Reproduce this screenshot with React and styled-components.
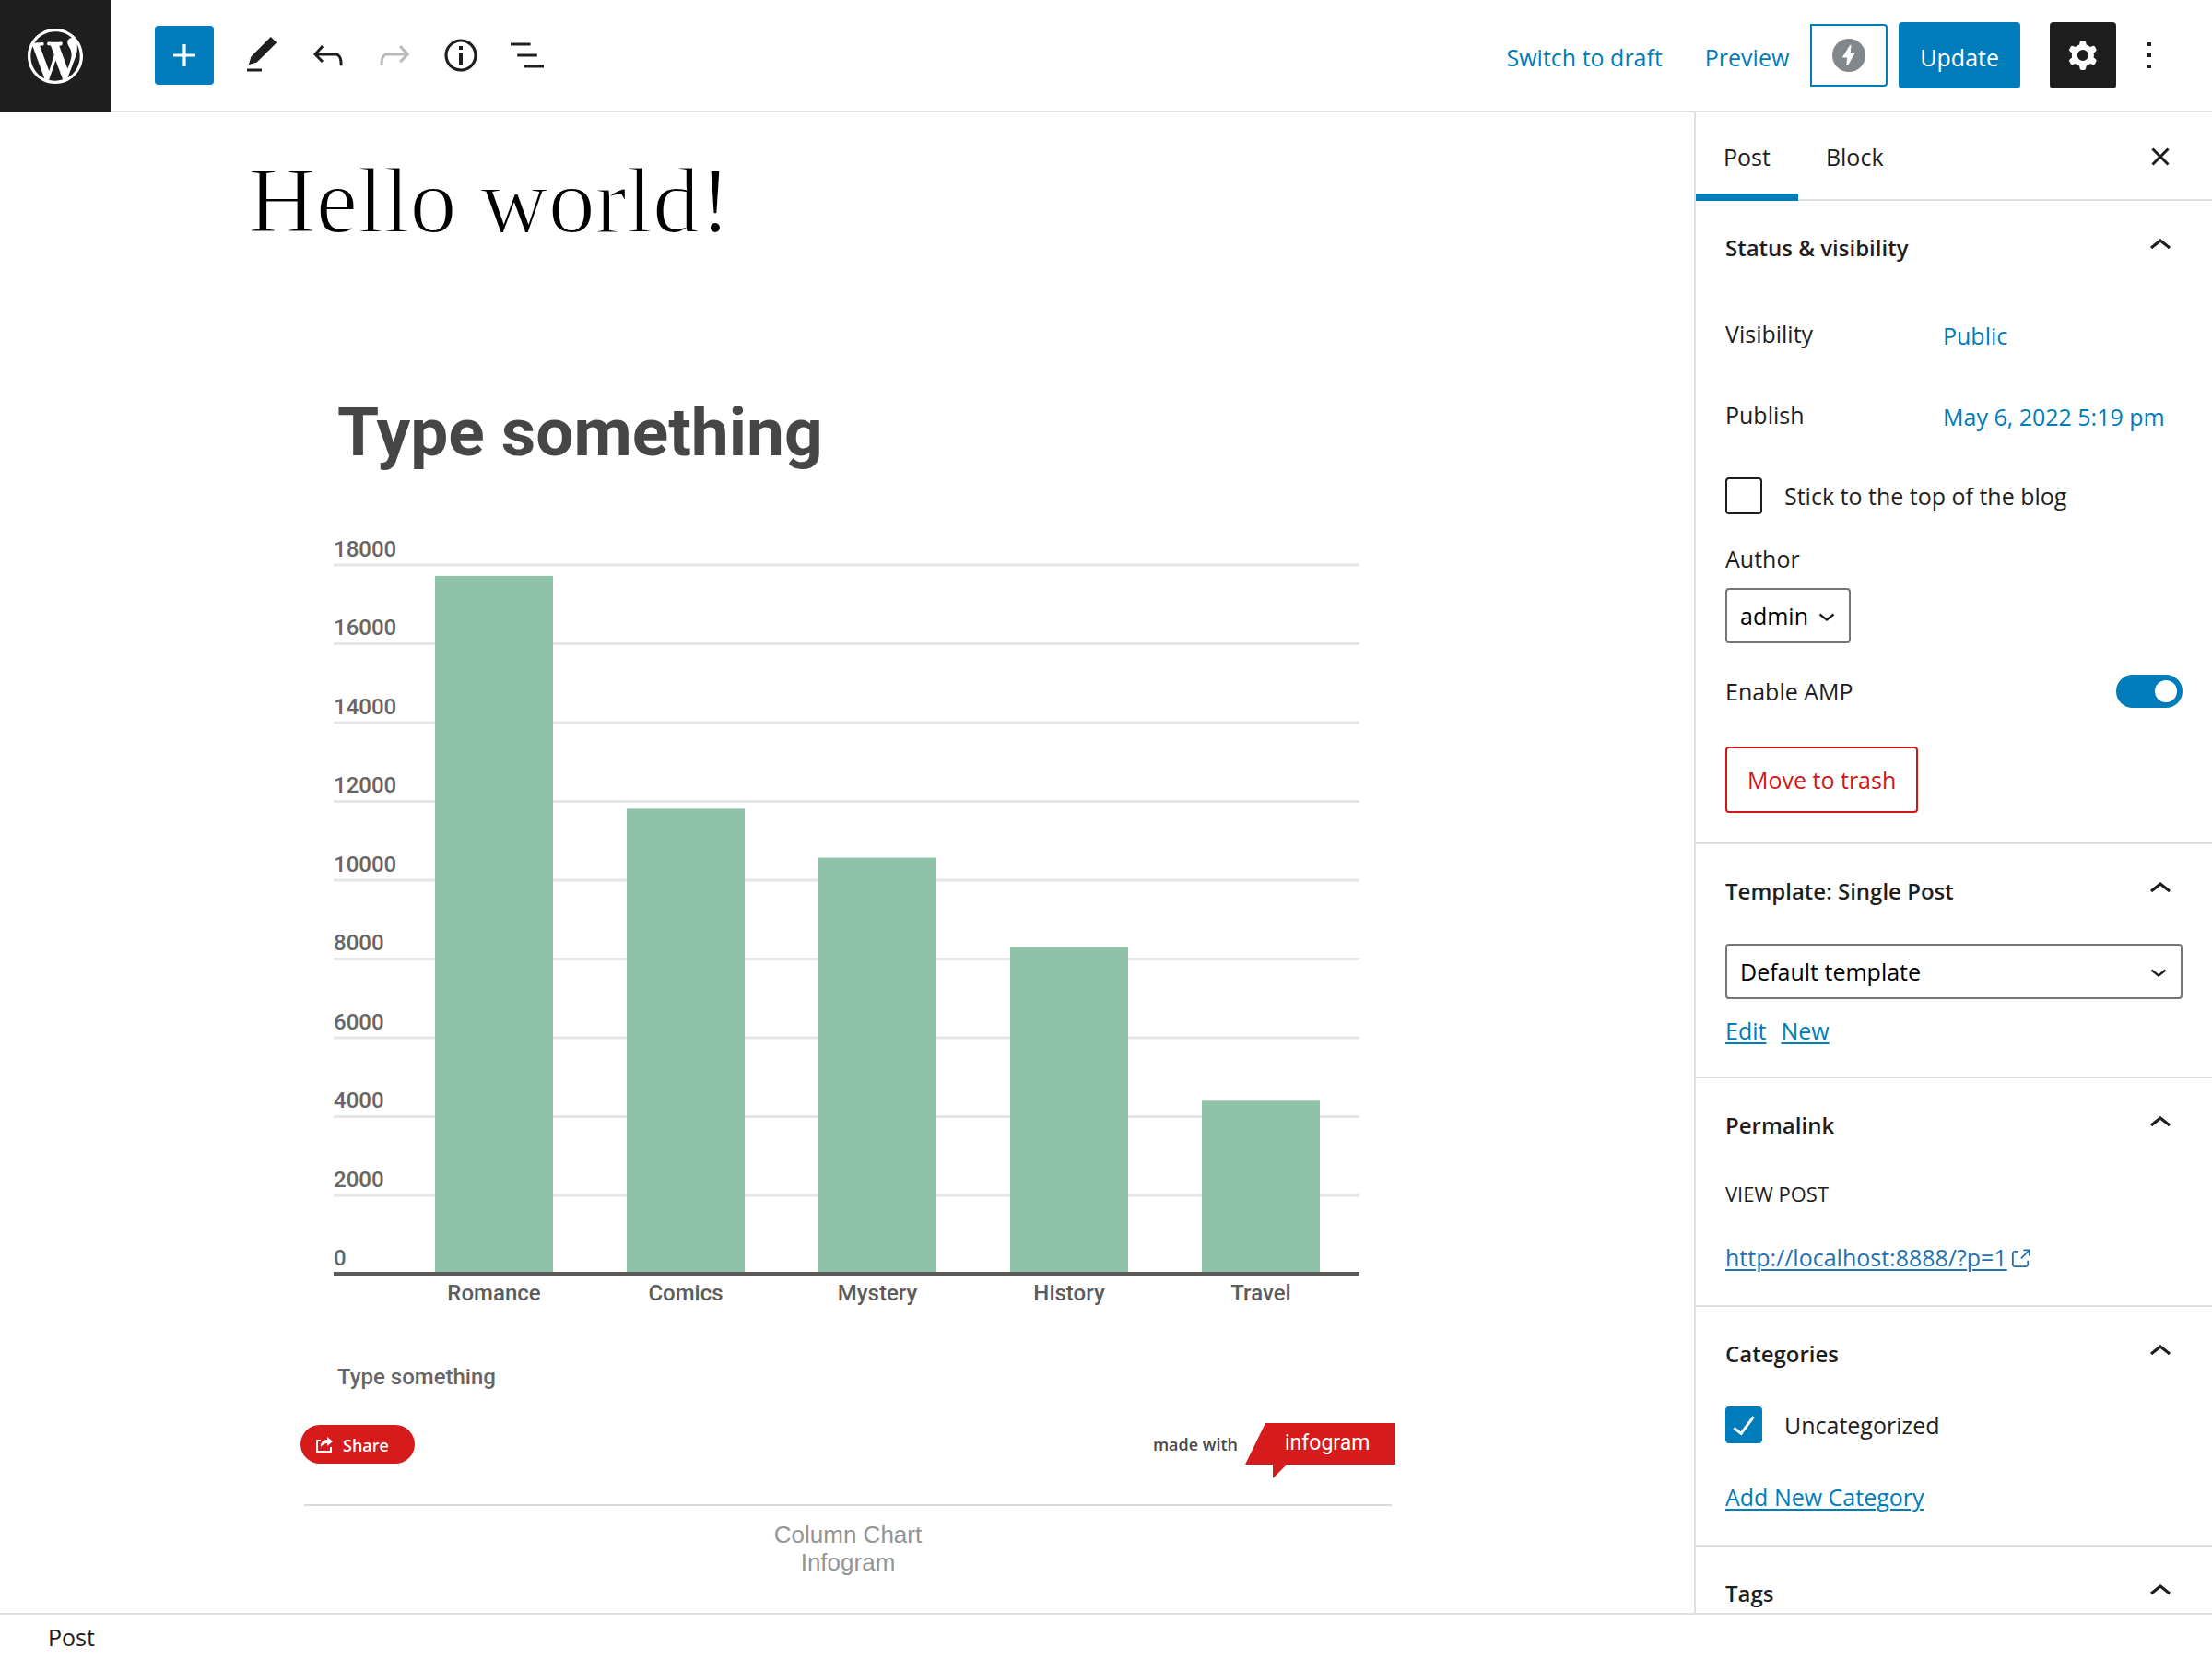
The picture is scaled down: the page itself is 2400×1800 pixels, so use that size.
import React, { useState } from "react";
import styled, { createGlobalStyle } from "styled-components";

const ui = '"Open Sans", "Noto Sans", sans-serif';
const chartFont = "Roboto, sans-serif";

const color = {
  ink: "#1e1e1e",
  line: "#e0e0e0",
  blue: "#007cba",
  link: "#2271b1",
  red: "#cc1818",
  brand: "#d51b1b",
  bar: "#8fc3a9",
};

const GlobalStyle = createGlobalStyle`
  *, *::before, *::after { box-sizing: border-box; }
  body { margin: 0; background: #fff; color: ${color.ink}; font: 25px/36px ${ui}; }
  button, input, select { font: inherit; color: inherit; margin: 0; }
  button { cursor: pointer; }
  h1, h2, h3, p, figure { margin: 0; font: inherit; }
`;

const Shell = styled.div`
  display: grid;
  grid-template-rows: auto minmax(0, 1fr) auto;
  height: 100vh;
`;

const Header = styled.header`
  display: flex;
  justify-content: space-between;
  height: 122px;
  border-bottom: 2px solid ${color.line};
`;

const Tools = styled.div`
  display: flex;
  align-items: center;
`;

const HomeLink = styled.a`
  display: grid;
  place-items: center;
  align-self: flex-start;
  width: 120px;
  height: 122px;
  margin-right: 48px;
  background: ${color.ink};
  color: #fff;
`;

const AddButton = styled.button`
  display: grid;
  place-items: center;
  width: 64px;
  height: 64px;
  margin-right: 16px;
  padding: 0;
  border: 0;
  border-radius: 4px;
  background: ${color.blue};
  color: #fff;
`;

const IconButton = styled.button`
  display: grid;
  place-items: center;
  width: 72px;
  height: 72px;
  padding: 0;
  border: 0;
  border-radius: 4px;
  background: ${(p) => (p.$pressed ? color.ink : "transparent")};
  color: ${(p) => (p.$pressed ? "#fff" : color.ink)};
  &:disabled { color: #bbb; cursor: default; }
`;

const Actions = styled(Tools)`
  padding-right: 32px;
`;

const TextButton = styled.button`
  height: 72px;
  padding: 4px 23px 0;
  border: 0;
  background: transparent;
  color: ${color.blue};
`;

const AmpButton = styled.button`
  display: grid;
  place-items: center;
  width: 84px;
  height: 68px;
  margin-right: 12px;
  padding: 0;
  border: 2px solid ${color.blue};
  border-radius: 0 4px 4px 0;
  background: #fff;
`;

const UpdateButton = styled.button`
  height: 72px;
  margin-right: 32px;
  padding: 4px 23px 0;
  border: 0;
  border-radius: 4px;
  background: ${color.blue};
  color: #fff;
`;

const Body = styled.div`
  display: grid;
  grid-template-columns: minmax(0, 1fr) 562px;
`;

const Canvas = styled.main`
  overflow: hidden;
  padding: 36px 32px 0;
`;

const Article = styled.article`
  max-width: 1300px;
  margin: 0 auto;
`;

const PostTitle = styled.h1`
  font: 400 102px/120px "Liberation Serif", serif;
  color: #000;
  -webkit-text-stroke: 2px #fff;
`;

const Embed = styled.figure`
  margin: 147px 55px 0 57px;
`;

const ChartTitle = styled.h2`
  padding-left: 40px;
  font: 700 73px/88px ${chartFont};
  color: #464646;
`;

const ChartSvg = styled.svg`
  display: block;
  width: 100%;
  height: auto;
  margin-top: 67px;
  font: 500 24px ${chartFont};
`;

const Footnote = styled.p`
  margin-top: 46px;
  padding-left: 40px;
  font: 500 24px/36px ${chartFont};
  color: #666;
`;

const EmbedFooter = styled.div`
  display: flex;
  justify-content: space-between;
  margin-top: 32px;
`;

const ShareButton = styled.button`
  display: flex;
  align-items: center;
  gap: 10px;
  height: 42px;
  margin-top: 2px;
  padding: 2px 28px 0 16px;
  border: 0;
  border-radius: 21px;
  background: ${color.brand};
  color: #fff;
  font-size: 18px;
  font-weight: 600;
  line-height: 24px;
`;

const Credit = styled.a`
  display: flex;
  gap: 8px;
  color: #4a4a4a;
  font-size: 18px;
  font-weight: 600;
  line-height: 46px;
  text-decoration: none;
`;

const Flag = styled.span`
  width: 163px;
  height: 60px;
  padding-left: 43px;
  background: ${color.brand};
  clip-path: polygon(22px 0, 100% 0, 100% 45px, 45px 45px, 30px 100%, 30px 45px, 0 45px);
  color: #fff;
  font: 400 23px/44px ${chartFont};
`;

const Caption = styled.figcaption`
  display: flex;
  flex-direction: column;
  align-items: center;
  margin: 28px 4px 0;
  padding-top: 16px;
  border-top: 2px solid #dadada;
  font: 26px/30px "Liberation Sans", sans-serif;
  color: #949494;
`;

const Sidebar = styled.aside`
  overflow-y: auto;
  scrollbar-width: none;
  border-left: 2px solid ${color.line};
`;

const TabBar = styled.div`
  display: flex;
  height: 96px;
  padding-right: 20px;
  box-shadow: inset 0 -2px ${color.line};
`;

const Tab = styled.button`
  padding: 0 30px;
  border: 0;
  background: transparent;
  box-shadow: ${(p) => (p.$active ? `inset 0 -8px ${color.blue}` : "none")};
  font-weight: 500;
`;

const CloseButton = styled(IconButton)`
  align-self: center;
  margin-left: auto;
`;

const Panel = styled.section`
  padding: 0 32px 32px;
  border-bottom: 2px solid ${color.line};
`;

const PanelToggle = styled.button`
  display: flex;
  align-items: center;
  justify-content: space-between;
  width: 100%;
  height: 98px;
  margin-bottom: 10px;
  padding: 0;
  border: 0;
  background: transparent;
  text-align: left;
  font-size: 24px;
  font-weight: 600;
`;

const PanelTitle = styled.span`
  padding-top: 4px;
`;

const Rows = styled.div`
  display: grid;
  gap: 16px;
`;

const Row = styled.div`
  display: grid;
  grid-template-columns: 236px 1fr;
  align-items: center;
  height: 72px;
`;

const CheckLabel = styled.label`
  display: flex;
  align-items: center;
  gap: 24px;
  min-height: ${(p) => (p.$tall ? "72px" : "40px")};
`;

const RowButton = styled.button`
  justify-self: start;
  padding: 4px 0 0;
  border: 0;
  background: transparent;
  color: ${color.blue};
  white-space: nowrap;
`;

const CheckBox = styled.span`
  display: grid;
  place-items: center;
  width: 40px;
  height: 40px;
  color: #fff;
  svg { grid-area: 1 / 1; pointer-events: none; margin: -4px; }
`;

const CheckInput = styled.input`
  grid-area: 1 / 1;
  appearance: none;
  width: 40px;
  height: 40px;
  border: 2px solid ${color.ink};
  border-radius: 4px;
  background: #fff;
  &:checked { border-color: ${color.blue}; background: ${color.blue}; }
`;

const Field = styled.div`
  display: grid;
  justify-items: start;
  gap: 14px;
  margin-top: 14px;
`;

const SelectBox = styled.span`
  display: ${(p) => (p.$wide ? "grid" : "inline-grid")};
  align-items: center;
  svg { grid-area: 1 / 1; justify-self: end; margin-right: 8px; pointer-events: none; }
`;

const SelectInput = styled.select`
  grid-area: 1 / 1;
  appearance: none;
  height: 60px;
  padding: 0 44px 0 14px;
  border: 2px solid #757575;
  border-radius: 4px;
  background: #fff;
  color: #000;
`;

const SwitchRow = styled.label`
  display: flex;
  align-items: center;
  justify-content: space-between;
  margin: 34px 0 42px;
`;

const Switch = styled.input`
  appearance: none;
  display: flex;
  align-items: center;
  justify-content: flex-end;
  width: 72px;
  height: 36px;
  padding: 6px;
  border-radius: 18px;
  background: ${color.blue};
  &::before { content: ""; width: 24px; height: 24px; border-radius: 50%; background: #fff; }
  &:not(:checked) { justify-content: flex-start; background: #757575; }
`;

const TrashButton = styled.button`
  height: 72px;
  padding: 0 22px;
  border: 2px solid ${color.red};
  border-radius: 4px;
  background: #fff;
  color: ${color.red};
`;

const LinkRow = styled.div`
  display: flex;
  gap: 16px;
  margin-top: 16px;
`;

const PanelLink = styled.a`
  display: inline-flex;
  align-items: center;
  color: ${(p) => (p.$external ? color.link : color.blue)};
  line-height: ${(p) => (p.$block ? "40px" : "36px")};
  text-decoration: underline;
  text-decoration-thickness: 2px;
  text-underline-offset: 3px;
  svg { margin-top: 4px; }
`;

const SubHeading = styled.h3`
  margin-bottom: 32px;
  font-size: 22px;
  font-weight: 500;
  line-height: 34px;
`;

const Stack = styled.div`
  display: grid;
  justify-items: start;
  gap: 38px;
`;

const Footer = styled.footer`
  height: 50px;
  padding: 6px 52px 0;
  border-top: 2px solid ${color.line};
`;

const glyph = {
  plus: "M18 11.2h-5.2V6h-1.6v5.2H6v1.6h5.2V18h1.6v-5.2H18z",
  edit: "M20.1 5.1L16.9 2 6.2 12.7l-1.3 4.4 4.5-1.3L20.1 5.1zM4 20.8h8v-1.5H4v1.5z",
  undo: "M18.3 11.7c-.6-.6-1.4-.9-2.3-.9H6.7l2.9-3.3-1.1-1-4.5 5L8.5 16l1-1-2.7-2.7H16c.5 0 .9.2 1.3.5 1 1 1 3.4 1 4.5v.3h1.5v-.2c0-1.5 0-4.3-1.5-5.7z",
  redo: "M15.6 6.5l-1.1 1 2.9 3.3H8c-.9 0-1.7.3-2.3.9-1.4 1.5-1.4 4.2-1.4 5.6v.2h1.5v-.3c0-1.1 0-3.5 1-4.5.3-.3.7-.5 1.3-.5h9.2L14.5 15l1.1 1.1 4.6-4.6-4.6-5z",
  info: "M12 3.2c-4.8 0-8.8 3.9-8.8 8.8 0 4.8 3.9 8.8 8.8 8.8 4.8 0 8.8-3.9 8.8-8.8 0-4.8-4-8.8-8.8-8.8zm0 16c-4 0-7.2-3.3-7.2-7.2C4.8 8 8 4.8 12 4.8s7.2 3.3 7.2 7.2c0 4-3.2 7.2-7.2 7.2zM11 17h2v-6h-2v6zm0-8h2V7h-2v2z",
  list: "M13.8 5.2H3v1.5h10.8V5.2zm-3.6 12v1.5H21v-1.5H10.2zm7.2-6H6.6v1.5h10.8v-1.5z",
  cog: "M10.289 4.836A1 1 0 0111.275 4h1.306a1 1 0 01.987.836l.244 1.466c.787.26 1.503.679 2.108 1.218l1.393-.522a1 1 0 011.216.437l.653 1.13a1 1 0 01-.23 1.273l-1.148.944a6.025 6.025 0 010 2.435l1.149.946a1 1 0 01.23 1.272l-.653 1.13a1 1 0 01-1.216.437l-1.394-.522c-.605.54-1.32.958-2.108 1.218l-.244 1.466a1 1 0 01-.987.836h-1.306a1 1 0 01-.986-.836l-.244-1.466a5.995 5.995 0 01-2.108-1.218l-1.394.522a1 1 0 01-1.217-.436l-.653-1.131a1 1 0 01.23-1.272l1.149-.946a6.026 6.026 0 010-2.435l-1.148-.944a1 1 0 01-.23-1.272l.653-1.131a1 1 0 011.217-.437l1.393.522a5.994 5.994 0 012.108-1.218l.244-1.466zM14.929 12a3 3 0 11-6 0 3 3 0 016 0z",
  more: "M13 19h-2v-2h2v2zm0-6h-2v-2h2v2zm0-6h-2V5h2v2z",
  close: "M12 13.06l3.712 3.713 1.061-1.06L13.061 12l3.712-3.712-1.06-1.06L12 10.938 8.288 7.227l-1.061 1.06L10.939 12l-3.712 3.712 1.06 1.061L12 13.061z",
  up: "M6.5 12.4L12 8l5.5 4.4-.9 1.2L12 10l-4.5 3.6-1-1.2z",
  down: "M17.5 11.6L12 16l-5.5-4.4.9-1.2L12 14l4.5-3.6 1 1.2z",
  check: "M16.7 7.1l-6.3 8.5-3.3-2.5-.9 1.2 4.5 3.4L17.9 8z",
  external: "M18.2 17c0 .7-.6 1.2-1.2 1.2H7c-.7 0-1.2-.6-1.2-1.2V7c0-.7.6-1.2 1.2-1.2h3.2V4.2H7C5.5 4.2 4.2 5.5 4.2 7v10c0 1.5 1.2 2.8 2.8 2.8h10c1.5 0 2.8-1.2 2.8-2.8v-3.6h-1.5V17zM14.9 3v1.5h3.7l-6.4 6.4 1.1 1.1 6.4-6.4v3.7h1.5V3h-6.3z",
  wordpress: "M20 10c0-5.51-4.49-10-10-10C4.48 0 0 4.49 0 10c0 5.52 4.48 10 10 10 5.51 0 10-4.48 10-10zM7.78 15.37L4.37 6.22c.55-.02 1.17-.08 1.17-.08.5-.06.44-1.13-.06-1.11 0 0-1.45.11-2.37.11-.18 0-.37 0-.58-.01C4.12 2.69 6.87 1.11 10 1.11c2.33 0 4.45.87 6.05 2.34-.68-.11-1.65.39-1.65 1.58 0 .74.45 1.36.9 2.1.35.61.55 1.36.55 2.46 0 1.49-1.4 5-1.4 5l-3.03-8.37c.54-.02.82-.17.82-.17.5-.05.44-1.25-.06-1.22 0 0-1.44.12-2.38.12-.87 0-2.33-.12-2.33-.12-.5-.03-.56 1.2-.06 1.22l.92.08 1.26 3.41zM17.41 10c.24-.64.74-1.87.43-4.25.7 1.29 1.05 2.71 1.05 4.25 0 3.29-1.73 6.24-4.4 7.78.97-2.59 1.94-5.2 2.92-7.78zM6.1 18.09C3.12 16.65 1.11 13.53 1.11 10c0-1.3.23-2.48.72-3.59C3.25 10.3 4.67 14.2 6.1 18.09zm4.03-6.63l2.58 6.98c-.86.29-1.76.45-2.71.45-.79 0-1.57-.11-2.29-.33.81-2.38 1.62-4.74 2.42-7.1z",
};

function Icon({ name, size = 48, viewBox = "0 0 24 24" }) {
  return (
    <svg width={size} height={size} viewBox={viewBox} fill="currentColor" fillRule="evenodd" aria-hidden="true">
      <path d={glyph[name]} />
    </svg>
  );
}

const ticks = [18000, 16000, 14000, 12000, 10000, 8000, 6000, 4000, 2000, 0];
const books = [
  { name: "Romance", value: 17710 },
  { name: "Comics", value: 11805 },
  { name: "Mystery", value: 10560 },
  { name: "History", value: 8290 },
  { name: "Travel", value: 4390 },
];
const zeroY = 802;
const step = 85.5;
const toY = (v) => zeroY - (v / 2000) * step;

function ColumnChart() {
  return (
    <ChartSvg viewBox="0 0 1188 850" role="img" aria-label="Column chart of book sales">
      {ticks.slice(0, -1).map((t) => (
        <rect key={t} x="36" y={toY(t) - 1} width="1113" height="3" fill="#e6e6e6" />
      ))}
      {books.map((b, i) => (
        <g key={b.name}>
          <rect x={146 + i * 208} y={toY(b.value)} width="128" height={zeroY - toY(b.value)} fill={color.bar} />
          <text x={210 + i * 208} y="831" textAnchor="middle" fill="#5c5c5c">{b.name}</text>
        </g>
      ))}
      <rect x="36" y="800" width="1113" height="4" fill="#5a5a5a" />
      {ticks.map((t) => (
        <text key={t} x="36" y={toY(t) - 9} fill="#666">{t}</text>
      ))}
    </ChartSvg>
  );
}

function SidebarPanel({ title, children }) {
  return (
    <Panel>
      <h2>
        <PanelToggle type="button" aria-expanded="true">
          <PanelTitle>{title}</PanelTitle>
          <Icon name="up" />
        </PanelToggle>
      </h2>
      {children}
    </Panel>
  );
}

function Check({ label, initial = false, tall }) {
  const [on, setOn] = useState(initial);
  return (
    <CheckLabel $tall={tall}>
      <CheckBox>
        <CheckInput type="checkbox" checked={on} onChange={() => setOn(!on)} />
        {on && <Icon name="check" />}
      </CheckBox>
      {label}
    </CheckLabel>
  );
}

export default function App() {
  return (
    <Shell>
      <GlobalStyle />
      <Header>
        <Tools>
          <HomeLink href="#posts" aria-label="View Posts">
            <Icon name="wordpress" size={72} viewBox="-2 -2 24 24" />
          </HomeLink>
          <AddButton type="button" aria-label="Add block"><Icon name="plus" /></AddButton>
          <IconButton type="button" aria-label="Tools"><Icon name="edit" /></IconButton>
          <IconButton type="button" aria-label="Undo"><Icon name="undo" /></IconButton>
          <IconButton type="button" aria-label="Redo" disabled><Icon name="redo" /></IconButton>
          <IconButton type="button" aria-label="Details"><Icon name="info" /></IconButton>
          <IconButton type="button" aria-label="List view"><Icon name="list" /></IconButton>
        </Tools>
        <Actions>
          <TextButton type="button">Switch to draft</TextButton>
          <TextButton type="button">Preview</TextButton>
          <AmpButton type="button" aria-label="Preview AMP">
            <svg width="36" height="36" viewBox="0 0 36 36" aria-hidden="true">
              <circle cx="18" cy="18" r="18" fill="#82878c" />
              <path d="M19.4 6.8h1.2l-.9 8.3h4.2c.6 0 .7.5.4 1L17 28.9h-1.800l1-8.500h-4.400c-.7 0-.8-.5-.5-1z" fill="#fff" />
            </svg>
          </AmpButton>
          <UpdateButton type="button">Update</UpdateButton>
          <IconButton type="button" aria-label="Settings" $pressed><Icon name="cog" /></IconButton>
          <IconButton type="button" aria-label="Options"><Icon name="more" /></IconButton>
        </Actions>
      </Header>

      <Body>
        <Canvas>
          <Article>
            <PostTitle>Hello world!</PostTitle>
            <Embed>
              <ChartTitle>Type something</ChartTitle>
              <ColumnChart />
              <Footnote>Type something</Footnote>
              <EmbedFooter>
                <ShareButton type="button">
                  <svg width="20" height="20" viewBox="0 0 20 20" aria-hidden="true">
                    <path d="M6 5H2V17H17V12" fill="none" stroke="#fff" strokeWidth="2" />
                    <path d="M13 1L19 6L13 11V8Q9 8 6 12Q6 4 13 4z" fill="#fff" />
                  </svg>
                  Share
                </ShareButton>
                <Credit href="#infogram">
                  made with
                  <Flag>infogram</Flag>
                </Credit>
              </EmbedFooter>
              <Caption>
                <span>Column Chart</span>
                <span>Infogram</span>
              </Caption>
            </Embed>
          </Article>
        </Canvas>

        <Sidebar>
          <TabBar>
            <Tab type="button" $active>Post</Tab>
            <Tab type="button">Block</Tab>
            <CloseButton type="button" aria-label="Close settings"><Icon name="close" /></CloseButton>
          </TabBar>

          <SidebarPanel title="Status & visibility">
            <Rows>
              <Row>
                <span>Visibility</span>
                <RowButton type="button">Public</RowButton>
              </Row>
              <Row>
                <span>Publish</span>
                <RowButton type="button">May 6, 2022 5:19 pm</RowButton>
              </Row>
              <Check label="Stick to the top of the blog" tall />
            </Rows>
            <Field>
              <label htmlFor="author">Author</label>
              <SelectBox>
                <SelectInput id="author"><option>admin</option></SelectInput>
                <Icon name="down" size={36} />
              </SelectBox>
            </Field>
            <SwitchRow>
              Enable AMP
              <Switch type="checkbox" role="switch" defaultChecked />
            </SwitchRow>
            <TrashButton type="button">Move to trash</TrashButton>
          </SidebarPanel>

          <SidebarPanel title="Template: Single Post">
            <SelectBox $wide>
              <SelectInput aria-label="Template"><option>Default template</option></SelectInput>
              <Icon name="down" size={36} />
            </SelectBox>
            <LinkRow>
              <PanelLink href="#edit">Edit</PanelLink>
              <PanelLink href="#new">New</PanelLink>
            </LinkRow>
          </SidebarPanel>

          <SidebarPanel title="Permalink">
            <SubHeading>VIEW POST</SubHeading>
            <PanelLink href="#post" $external $block>
              http://localhost:8888/?p=1
              <Icon name="external" size={28} />
            </PanelLink>
          </SidebarPanel>

          <SidebarPanel title="Categories">
            <Stack>
              <Check label="Uncategorized" initial />
              <PanelLink href="#category" $block>Add New Category</PanelLink>
            </Stack>
          </SidebarPanel>

          <SidebarPanel title="Tags" />
        </Sidebar>
      </Body>

      <Footer>Post</Footer>
    </Shell>
  );
}
